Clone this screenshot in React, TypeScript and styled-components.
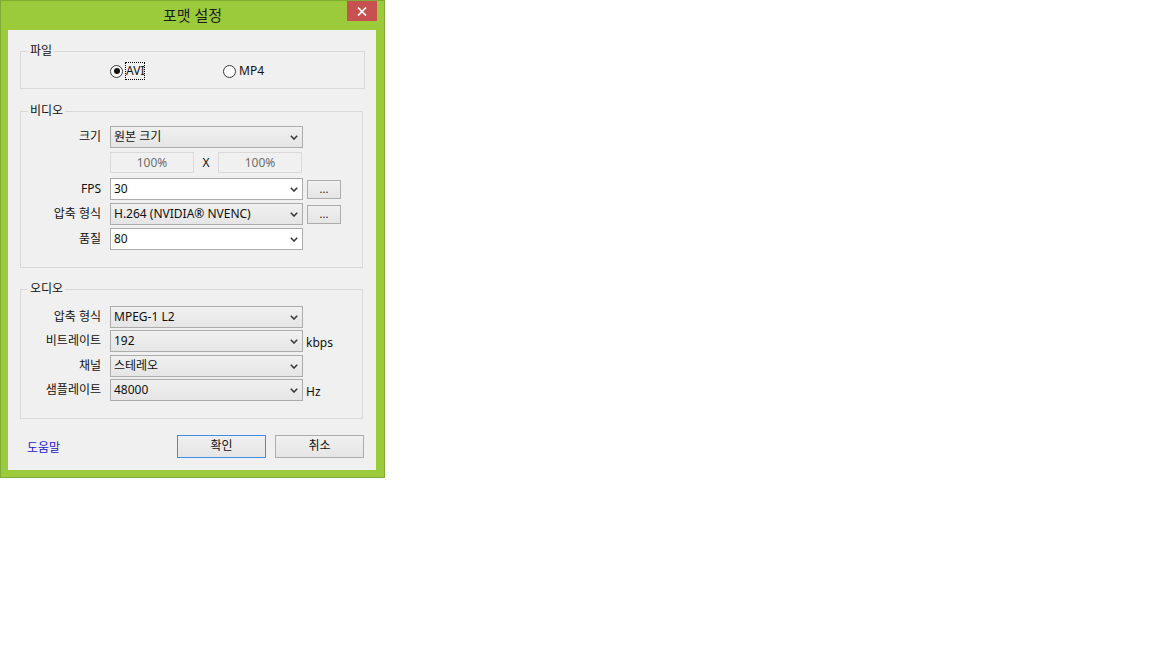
import styled, { createGlobalStyle } from 'styled-components'

const uiFont = `"Noto Sans", "Noto Sans CJK KR", sans-serif`

const GlobalStyle = createGlobalStyle`
  html, body {
    margin: 0;
    background: #ffffff;
  }
  body {
    font-family: ${uiFont};
    font-size: 12px;
    color: #111111;
  }
  * {
    box-sizing: border-box;
  }
`

const Window = styled.div`
  display: flex;
  flex-direction: column;
  width: 385px;
  height: 478px;
  border: 1px solid #80ab34;
  background: #9bcb3b;
`

const TitleBar = styled.div`
  display: grid;
  grid-template-columns: 1fr auto 1fr;
  align-items: start;
  height: 29px;
`

const Title = styled.div`
  grid-column: 2;
  font-size: 15px;
  line-height: 28px;
  color: #1c1c1c;
`

const CloseButton = styled.div`
  grid-column: 3;
  justify-self: end;
  display: flex;
  align-items: center;
  justify-content: center;
  width: 30px;
  height: 20px;
  margin-right: 7px;
  background: #c75050;
`

const Client = styled.div`
  display: flex;
  flex-direction: column;
  flex: 1;
  margin: 0 8px 7px 7px;
  padding: 13px 12px 0 12px;
  background: #f0f0f0;
`

const Group = styled.fieldset<{ $width: number; $top: number; $pad: string }>`
  width: ${p => p.$width}px;
  min-width: 0;
  margin: ${p => p.$top}px 0 0 0;
  padding: ${p => p.$pad};
  border: 1px solid #d9d9d9;
`

const Legend = styled.legend`
  margin-left: 7px;
  padding: 0 2px;
  font-size: 12px;
  line-height: 16px;
`

const RadioGroup = styled.div`
  display: grid;
  grid-template-columns: 113px auto;
  padding-left: 89px;
`

const RadioOption = styled.label`
  display: flex;
  align-items: center;
  height: 18px;
`

const RadioCircle = styled.span<{ $checked?: boolean }>`
  position: relative;
  width: 13px;
  height: 13px;
  border: 1px solid #3a3a3a;
  border-radius: 50%;
  background: #ffffff;

  &::after {
    content: '';
    display: ${p => (p.$checked ? 'block' : 'none')};
    position: absolute;
    left: 2.5px;
    top: 2.5px;
    width: 6px;
    height: 6px;
    border-radius: 50%;
    background: #111111;
  }
`

const RadioText = styled.span<{ $focused?: boolean }>`
  margin-left: 2px;
  border: 1px dotted ${p => (p.$focused ? '#000000' : 'transparent')};
  line-height: 16px;
`

const Row = styled.div<{ $gap?: number }>`
  display: flex;
  align-items: center;
  height: 22px;
  margin-top: ${p => p.$gap ?? 0}px;
`

const FieldLabel = styled.div`
  width: 81px;
  margin-right: 8px;
  padding-right: 1px;
  text-align: right;
  line-height: 16px;
  white-space: nowrap;
`

const Combo = styled.div<{ $editable?: boolean }>`
  display: flex;
  align-items: center;
  width: 193px;
  height: 22px;
  padding: 0 4px 0 3px;
  border: 1px solid #acacac;
  background: ${p =>
    p.$editable ? '#ffffff' : 'linear-gradient(#f0f0f0, #e5e5e5)'};
  line-height: 16px;
  white-space: nowrap;
`

const ComboText = styled.span`
  flex: 1;
`

const SizeRow = styled.div`
  display: flex;
  align-items: center;
  height: 21px;
  margin: 4px 0 0 89px;
`

const DisabledEdit = styled.div`
  width: 84px;
  height: 21px;
  border: 1px solid #d9d9d9;
  color: #6d6d6d;
  text-align: center;
  line-height: 19px;
`

const Times = styled.div`
  width: 24px;
  text-align: center;
  line-height: 16px;
`

const SmallButton = styled.div`
  width: 34px;
  height: 19px;
  margin-left: 4px;
  border: 1px solid #acacac;
  background: linear-gradient(#f0f0f0, #e5e5e5);
  text-align: center;
  font-size: 11px;
  line-height: 15px;
`

const Unit = styled.div`
  margin-left: 3px;
  padding-top: 4px;
  line-height: 16px;
`

const Footer = styled.div`
  display: flex;
  align-items: center;
  gap: 9px;
  margin-top: 16px;
  padding-left: 7px;
`

const HelpLink = styled.a`
  margin-right: auto;
  padding-top: 3px;
  color: #1a1acc;
  text-decoration: none;
  line-height: 16px;
`

const DialogButton = styled.div<{ $default?: boolean }>`
  width: 89px;
  height: 23px;
  border: 1px solid ${p => (p.$default ? '#3c8ee6' : '#acacac')};
  background: linear-gradient(#f0f0f0, #e5e5e5);
  text-align: center;
  line-height: 20px;
`

const Chevron = () => (
  <svg width="8" height="5" viewBox="0 0 8 5">
    <path d="M0.8 0.8 L4 4 L7.2 0.8" fill="none" stroke="#3a3a3a" strokeWidth="1.6" />
  </svg>
)

const Select = ({ value, editable }: { value: string; editable?: boolean }) => (
  <Combo $editable={editable}>
    <ComboText>{value}</ComboText>
    <Chevron />
  </Combo>
)

export default function App() {
  return (
    <>
      <GlobalStyle />
      <Window>
        <TitleBar>
          <Title>포맷 설정</Title>
          <CloseButton>
            <svg width="10" height="9" viewBox="0 0 10 9">
              <path d="M1 0.5 L9 8.5 M9 0.5 L1 8.5" stroke="#ffffff" strokeWidth="1.7" />
            </svg>
          </CloseButton>
        </TitleBar>
        <Client>
          <Group $width={345} $top={0} $pad="3px 0 8px 0">
            <Legend>파일</Legend>
            <RadioGroup>
              <RadioOption>
                <RadioCircle $checked />
                <RadioText $focused>AVI</RadioText>
              </RadioOption>
              <RadioOption>
                <RadioCircle />
                <RadioText>MP4</RadioText>
              </RadioOption>
            </RadioGroup>
          </Group>

          <Group $width={343} $top={14} $pad="7px 0 17px 0">
            <Legend>비디오</Legend>
            <Row>
              <FieldLabel>크기</FieldLabel>
              <Select value="원본 크기" />
            </Row>
            <SizeRow>
              <DisabledEdit>100%</DisabledEdit>
              <Times>X</Times>
              <DisabledEdit>100%</DisabledEdit>
            </SizeRow>
            <Row $gap={5}>
              <FieldLabel>FPS</FieldLabel>
              <Select value="30" editable />
              <SmallButton>...</SmallButton>
            </Row>
            <Row $gap={3}>
              <FieldLabel>압축 형식</FieldLabel>
              <Select value="H.264 (NVIDIA® NVENC)" />
              <SmallButton>...</SmallButton>
            </Row>
            <Row $gap={3}>
              <FieldLabel>품질</FieldLabel>
              <Select value="80" editable />
            </Row>
          </Group>

          <Group $width={343} $top={13} $pad="9px 0 17px 0">
            <Legend>오디오</Legend>
            <Row>
              <FieldLabel>압축 형식</FieldLabel>
              <Select value="MPEG-1 L2" />
            </Row>
            <Row $gap={2}>
              <FieldLabel>비트레이트</FieldLabel>
              <Select value="192" />
              <Unit>kbps</Unit>
            </Row>
            <Row $gap={3}>
              <FieldLabel>채널</FieldLabel>
              <Select value="스테레오" />
            </Row>
            <Row $gap={2}>
              <FieldLabel>샘플레이트</FieldLabel>
              <Select value="48000" />
              <Unit>Hz</Unit>
            </Row>
          </Group>

          <Footer>
            <HelpLink href="#">도움말</HelpLink>
            <DialogButton $default>확인</DialogButton>
            <DialogButton>취소</DialogButton>
          </Footer>
        </Client>
      </Window>
    </>
  )
}
